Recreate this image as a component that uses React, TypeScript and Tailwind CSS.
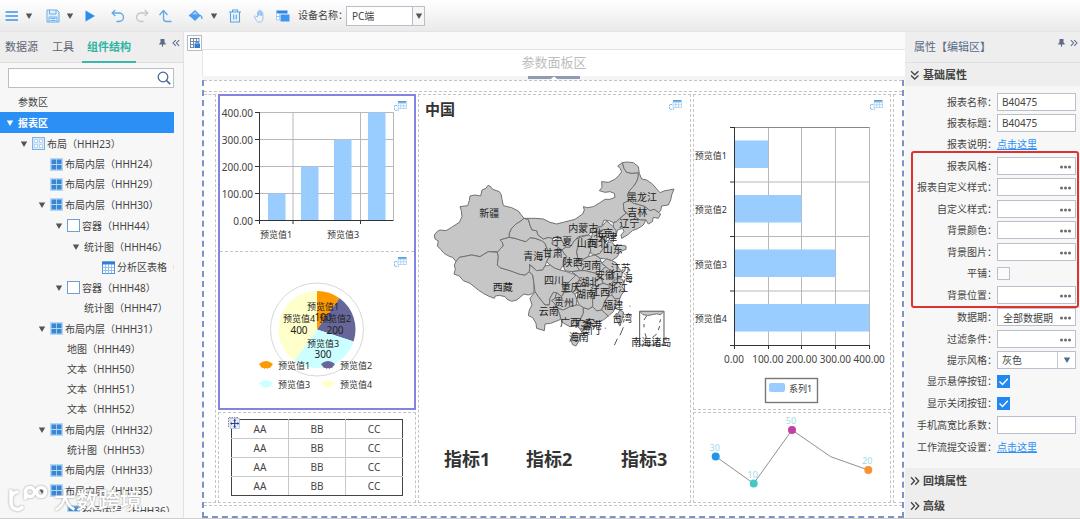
import React from "react";

type Pt = [number, number];

/* ---------- small shared icons ---------- */

function Caret({ className = "text-[#555]" }: { className?: string }) {
  return (
    <svg width="8" height="6" viewBox="0 0 8 6" className={`shrink-0 ${className}`} aria-hidden="true">
      <path d="M0.8 0.5h6.4L4 6z" fill="currentColor" />
    </svg>
  );
}

function PinIcon() {
  return (
    <svg width="7" height="8" viewBox="0 0 7 8" aria-hidden="true">
      <path d="M1.5 0h4v3.4l1.2 1.2v.8H4v2.4H3V5.400H.3v-.8l1.200-1.200z" fill="#5b6b88" />
    </svg>
  );
}

function Chevrons({ dir, size = 8, color = "#5b6b88" }: { dir: "left" | "right" | "down"; size?: number; color?: string }) {
  const d = {
    left: "M4.500 1L1.200 4.500l3.300 3.500M8.500 1L5.200 4.500l3.300 3.500",
    right: "M1 1l3.300 3.500L1 8M5 1l3.300 3.500L5 8",
    down: "M1 1l3.500 3.300L8 1M1 5l3.500 3.300L8 5",
  }[dir];
  return (
    <svg width={size} height={size} viewBox="0 0 9.500 9" aria-hidden="true">
      <path d={d} fill="none" stroke={color} strokeWidth="1.250" />
    </svg>
  );
}

function LinkTableIcon({ x, y }: { x: number; y: number }) {
  return (
    <g transform={`translate(${x} ${y})`}>
      <path d="M4 0h8.500v1.800H4z" fill="#4f9fe0" />
      <path d="M4 2.300h8.500v5.200H4zM4 4.800h8.500M6.800 2v5.500M9.600 2v5.500" fill="none" stroke="#a9cdee" strokeWidth=".8" />
      <path d="M3 4.500H.5v4.800h4V7.500" fill="none" stroke="#6fb2e8" strokeWidth=".9" strokeDasharray="1.800 .8" />
    </g>
  );
}

/* ---------- toolbar ---------- */

function ToolButton({ label, className, children }: { label: string; className: string; children: React.ReactNode }) {
  return (
    <button type="button" aria-label={label} className={`flex h-5 shrink-0 items-center justify-center ${className}`}>
      {children}
    </button>
  );
}

function Toolbar() {
  return (
    <header className="flex h-8 shrink-0 items-center border-b border-[#e4e4e4] bg-linear-to-b from-white to-[#eaeaea] pl-[5px]">
      <ToolButton label="菜单" className="w-[14px]">
        <svg width="14" height="12" viewBox="0 0 14 12">
          <path d="M.5 2h12.500M.5 6h12.500M.5 10h12.500" stroke="#3b93ea" strokeWidth="1.700" />
        </svg>
      </ToolButton>
      <ToolButton label="菜单选项" className="ml-[6px] w-2"><Caret /></ToolButton>
      <ToolButton label="保存" className="ml-[13px] w-[14px]">
        <svg width="14" height="14" viewBox="0 0 14 14" fill="none" stroke="#6aaeea">
          <path d="M1 1h10l2 2v10H1z" fill="#e2f0fc" />
          <path d="M3.500 1v4h6.500V1M3 13V8h8v5M4.500 9.500h5M4.500 11.500h5" />
        </svg>
      </ToolButton>
      <ToolButton label="保存选项" className="ml-[6px] w-2"><Caret /></ToolButton>
      <ToolButton label="运行" className="ml-[10px] w-3">
        <svg width="12" height="12" viewBox="0 0 12 12"><path d="M1.500.5L11 6l-9.500 5.500z" fill="#2b8cf0" /></svg>
      </ToolButton>
      <ToolButton label="撤销" className="ml-[15px] w-[14px]">
        <svg width="14" height="14" viewBox="0 0 14 14" fill="none" stroke="#5fa8ea" strokeWidth="1.300">
          <path d="M4.300 1L1.200 4l3.100 3M1.200 4h7a4.200 4.200 0 0 1 0 8.500H5.500" />
        </svg>
      </ToolButton>
      <ToolButton label="重做" className="ml-[10px] w-[14px]">
        <svg width="14" height="14" viewBox="0 0 14 14" fill="none" stroke="#c6c6c6" strokeWidth="1.300">
          <path d="M9.700 1l3.100 3-3.100 3M12.800 4h-7a4.200 4.200 0 0 0 0 8.500h2.700" />
        </svg>
      </ToolButton>
      <ToolButton label="上一级" className="ml-[9px] w-[15px]">
        <svg width="15" height="14" viewBox="0 0 15 14" fill="none" stroke="#5fa8ea" strokeWidth="1.300">
          <path d="M1.500 6L5.500 1.500 9.500 6M5.500 2v7.500c0 2 1 3 3 3h5" />
        </svg>
      </ToolButton>
      <ToolButton label="填充" className="ml-[15px] w-[15px]">
        <svg width="15" height="13" viewBox="0 0 15 13">
          <path d="M1 6.500L7 1l5.500 5.500L7 12z" fill="#4b9df0" />
          <path d="M4 5.500L7 2.800l3 2.700z" fill="#a9d2fa" />
          <path d="M1 6.500h11.500c1 .6 1.500 1.600 1.500 3.500" fill="none" stroke="#4b9df0" strokeWidth="1.300" />
        </svg>
      </ToolButton>
      <ToolButton label="填充选项" className="ml-[7px] w-2"><Caret /></ToolButton>
      <ToolButton label="删除" className="ml-[10px] w-[14px]">
        <svg width="14" height="14" viewBox="0 0 14 14" fill="none" stroke="#58a4ea" strokeWidth="1.100">
          <path d="M1 3h12M4.500 3V1h5v2M2.500 3v10h9V3M5.700 5.500v5M8.300 5.500v5" />
        </svg>
      </ToolButton>
      <ToolButton label="平移" className="ml-[11px] w-[14px]">
        <svg width="14" height="14" viewBox="0 0 14 14" fill="none" stroke="#8cc0f0" strokeWidth=".9">
          <path d="M4.500 8V3.200c0-1 1.300-1 1.300 0V6.500 1.800c0-1 1.400-1 1.400 0V6.500 2.300c0-1 1.400-1 1.400 0v4.500V4c0-1 1.300-1 1.300 0v5.200c0 2.800-1.400 4-3.400 4-2 0-2.800-1-3.600-2.600L1.500 8c-.4-1 .8-1.400 1.400-.6z" />
        </svg>
      </ToolButton>
      <ToolButton label="表格" className="ml-[9px] w-[14px]">
        <svg width="14" height="12" viewBox="0 0 14 12">
          <path d="M.5.5h11v3H.5z" fill="#2b86e8" />
          <path d="M.5 3.500h3v3h-3zM.5 6.500h3V10h-3z" fill="#fff" stroke="#8abcf0" strokeWidth=".7" />
          <path d="M4.500 4.500h9v7h-9z" fill="#3d96f2" />
        </svg>
      </ToolButton>
      <label htmlFor="device" className="ml-2 w-[47px] shrink-0 text-[10px] whitespace-nowrap text-[#444]">设备名称：</label>
      <div className="relative ml-px flex h-5 w-[79px]">
        <select id="device" defaultValue="PC端" className="block h-5 w-full appearance-none border border-[#b9bec8] bg-white pl-[5px] text-[10px] leading-[14px] text-[#444] outline-none">
          <option>PC端</option>
        </select>
        <span className="pointer-events-none absolute inset-y-px right-px flex w-3 items-center justify-center border-l border-[#b9bec8] bg-[#f6f6f6]">
          <Caret />
        </span>
      </div>
    </header>
  );
}

/* ---------- left tree ---------- */

type NodeIcon = "layout" | "inner" | "box" | "table";

function TreeIcon({ kind }: { kind: NodeIcon }) {
  return (
    <svg width="13" height="13" viewBox="0 0 13 13" className="mr-[2px] shrink-0" aria-hidden="true">
      {kind === "layout" && (
        <>
          <rect x=".5" y=".5" width="12" height="12" fill="#d8eafb" stroke="#7fb2e4" />
          <path d="M2.500 2.500h3v3h-3zM7.500 2.500h3v3h-3zM2.500 7.500h3v3h-3zM7.500 7.500h3v3h-3z" fill="#fff" stroke="#a8cdf0" strokeWidth=".8" />
        </>
      )}
      {kind === "inner" && (
        <>
          <rect width="13" height="13" fill="#b4d6f7" />
          <path d="M1.500 1.500h4.600v4.600H1.500zM6.900 1.500h4.600v4.600H6.900zM1.500 6.900h4.600v4.600H1.500zM6.900 6.900h4.600v4.600H6.900z" fill="#3a86d2" />
        </>
      )}
      {kind === "box" && <rect x=".5" y=".5" width="12" height="12" fill="#fff" stroke="#6f9fd4" />}
      {kind === "table" && (
        <>
          <rect x=".5" y="1" width="12" height="11.500" fill="#fff" stroke="#4f94dc" />
          <path d="M0 .5h13v3H0z" fill="#2f80d4" />
          <path d="M3.500 3v9.500M6.500 3v9.500M9.500 3v9.500M.5 6.500h12M.5 9.500h12" stroke="#7db2e8" strokeWidth=".8" />
        </>
      )}
    </svg>
  );
}

const LEVEL = ["pl-[6px]", "pl-[20px]", "pl-[38px]", "pl-[55px]", "pl-[72px]", "pl-[90px]"];

type Node = { name: string; id?: string; level: number; open?: boolean; icon?: NodeIcon; selected?: boolean };

const NODES: Node[] = [
  { name: "参数区", level: 0 },
  { name: "报表区", level: 0, open: true, selected: true },
  { name: "布局", id: "HHH23", level: 1, open: true, icon: "layout" },
  { name: "布局内层", id: "HHH24", level: 2, icon: "inner" },
  { name: "布局内层", id: "HHH29", level: 2, icon: "inner" },
  { name: "布局内层", id: "HHH30", level: 2, open: true, icon: "inner" },
  { name: "容器", id: "HHH44", level: 3, open: true, icon: "box" },
  { name: "统计图", id: "HHH46", level: 4, open: true },
  { name: "分析区表格", id: "HHH45", level: 5, icon: "table" },
  { name: "容器", id: "HHH48", level: 3, open: true, icon: "box" },
  { name: "统计图", id: "HHH47", level: 4 },
  { name: "布局内层", id: "HHH31", level: 2, open: true, icon: "inner" },
  { name: "地图", id: "HHH49", level: 3 },
  { name: "文本", id: "HHH50", level: 3 },
  { name: "文本", id: "HHH51", level: 3 },
  { name: "文本", id: "HHH52", level: 3 },
  { name: "布局内层", id: "HHH32", level: 2, open: true, icon: "inner" },
  { name: "统计图", id: "HHH53", level: 3 },
  { name: "布局内层", id: "HHH33", level: 2, icon: "inner" },
  { name: "布局内层", id: "HHH35", level: 2, open: true, icon: "inner" },
  { name: "布局内层", id: "HHH36", level: 3, icon: "inner" },
];

function TreeRow({ node }: { node: Node }) {
  const tone = node.selected ? "bg-[#2b90f5] font-bold text-white" : "text-[#444]";
  return (
    <li className={`flex items-center whitespace-nowrap ${node.open ? "h-[21px]" : "h-5"} ${LEVEL[node.level]} ${tone}`}>
      <span className="mr-1 flex w-2 shrink-0">
        {node.open && <Caret className={node.selected ? "text-white" : "text-[#555]"} />}
      </span>
      {node.icon && <TreeIcon kind={node.icon} />}
      <span>{node.name}{node.id && `（${node.id}）`}</span>
    </li>
  );
}

function LeftPanel() {
  return (
    <aside className="relative flex w-[184px] shrink-0 flex-col border-r border-[#e2e2e2] bg-[#f7f7f7]">
      <div className="flex h-[31px] shrink-0 border-b border-[#dcdcdc] bg-[#eeeeee] pl-[5px] text-[11px] text-[#5b6472]">
        <button type="button" className="w-[33px] whitespace-nowrap">数据源</button>
        <button type="button" className="ml-[14px] w-[22px] whitespace-nowrap">工具</button>
        <button type="button" className="ml-2 h-[31px] w-[54px] border-b-2 border-[#3db8a8] pt-[2px] font-bold whitespace-nowrap text-[#2fb5a2]">组件结构</button>
        <button type="button" aria-label="固定" className="mt-[7px] ml-[23px] flex h-2 items-center"><PinIcon /></button>
        <button type="button" aria-label="收起" className="mt-[7px] ml-[6px] flex h-2 items-center"><Chevrons dir="left" /></button>
      </div>
      <div className="mx-2 mt-[5px] flex h-5 w-[166px] shrink-0 items-center border border-[#b8bec9] bg-white">
        <input aria-label="搜索组件" className="h-full min-w-0 flex-1 bg-transparent px-1 text-[10px] outline-none" />
        <button type="button" aria-label="搜索" className="mr-[2px]">
          <svg width="14" height="14" viewBox="0 0 14 14" fill="none" stroke="#4a678c" strokeWidth="1.300">
            <circle cx="6" cy="6" r="4.800" />
            <path d="M9.500 9.500l3.700 3.700" strokeWidth="1.700" />
          </svg>
        </button>
      </div>
      <ul className="mt-1 mr-[9px] mb-[6px] min-h-0 flex-1 overflow-hidden text-[10px] leading-[20px]">
        {NODES.map((n, i) => <TreeRow key={i} node={n} />)}
      </ul>
      <div className="pointer-events-none absolute bottom-[5px] left-2 flex items-center gap-[6px] text-white drop-shadow-[0_0_1px_#999]">
        <svg width="40" height="28" viewBox="0 0 40 28" fill="none" stroke="currentColor" strokeWidth="3.600" strokeLinecap="round">
          <path d="M3 6v12a6.500 6.500 0 0 0 11 4.500M3 14c0-4 3-7 6-7" />
          <circle cx="22" cy="7" r="4.500" />
          <circle cx="33" cy="7" r="4.500" />
          <path d="M17.500 7v6" />
        </svg>
        <span className="text-[22px] leading-[28px] font-medium whitespace-nowrap">大数跨境</span>
      </div>
    </aside>
  );
}

/* ---------- charts ---------- */

function ColumnChart() {
  const bars = [
    { x: 268, y: 193.5 },
    { x: 301, y: 166.5 },
    { x: 334, y: 139.5 },
    { x: 368, y: 112.5 },
  ];
  const ticks = ["400.00", "300.00", "200.00", "100.00", "0.00"];
  return (
    <svg width="194" height="155" viewBox="220 96 194 155" className="mx-auto block shrink-0" role="img" aria-label="柱形图">
      <g stroke="#b8b8b8" fill="none">
        <path d="M259 112.500H393.500V220M259 139.500H393M259 166.500H393M259 193.500H393M293 112V220M360.500 112V220" />
      </g>
      {bars.map((b) => <rect key={b.x} x={b.x} y={b.y} width="17.500" height={220.5 - b.y} fill="#99ccff" />)}
      <path d="M259.500 112V224M255 220.500H393.500M255 112.500h4M255 139.500h4M255 166.500h4M255 193.500h4M293 220v4M360.500 220v4" stroke="#333" fill="none" />
      <g fontSize="10" fill="#444">
        {ticks.map((t, i) => <text key={t} x="253" y={116.5 + i * 27} textAnchor="end">{t}</text>)}
      </g>
      <g fontSize="9" fill="#333" textAnchor="middle">
        <text x="276" y="238">预览值1</text>
        <text x="343" y="238">预览值3</text>
      </g>
      <LinkTableIcon x={394} y={101} />
    </svg>
  );
}

const PIE_CENTER: Pt = [317, 329.5];

function slice(from: number, to: number, r = 38.5) {
  const [cx, cy] = PIE_CENTER;
  const p = (deg: number) => {
    const a = ((deg - 90) * Math.PI) / 180;
    return `${cx + r * Math.cos(a)} ${cy + r * Math.sin(a)}`;
  };
  return `M${cx} ${cy}L${p(from)}A${r} ${r} 0 0 1 ${p(to)}Z`;
}

function PieChart() {
  const colors = ["#ff9900", "#666699", "#ccffff", "#ffffcc"];
  const angles = [0, 36, 108, 216, 360];
  const labels: [string, number, number][] = [
    ["预览值1", 323, 310], ["100", 323, 321], ["预览值2", 335, 322], ["200", 335, 334],
    ["预览值3", 323, 347], ["300", 323, 358], ["预览值4", 299, 322], ["400", 299, 334],
  ];
  const legend: Pt[] = [[259, 365], [321, 365], [259, 384], [321, 384]];
  return (
    <svg width="194" height="156" viewBox="220 252 194 156" className="mx-auto block shrink-0" role="img" aria-label="饼图">
      <circle cx={PIE_CENTER[0]} cy={PIE_CENTER[1]} r="46.500" fill="none" stroke="#d8d8d8" />
      {colors.map((c, i) => <path key={c} d={slice(angles[i], angles[i + 1])} fill={c} />)}
      <g fontSize="9" fill="#222" textAnchor="middle">
        {labels.map(([t, x, y]) => <text key={t} x={x} y={y} fontSize={t.length === 3 ? 10 : 9}>{t}</text>)}
      </g>
      {legend.map(([x, y], i) => (
        <g key={i}>
          <path d={`M${x} ${y - 1}q7 -6 14 0l-3 4q-1.500 -1 -2.500 1q-1.500 -2 -3 0q-1 -2 -2.500 -1z`} fill={colors[i]} />
          <text x={x + 19} y={y + 4} fontSize="9" fill="#333">{`预览值${i + 1}`}</text>
        </g>
      ))}
      <LinkTableIcon x={394} y={257} />
    </svg>
  );
}

function BarChart() {
  const xs = [768, 801.5, 835.5, 869];
  return (
    <svg width="196" height="313" viewBox="694 95 196 313" className="mx-auto block shrink-0" role="img" aria-label="条形图">
      <path d="M768.500 127V345M801.500 127V345M835.500 127V345M869.500 127V345M734 182H869M734 236.500H869M734 291H869" stroke="#b8b8b8" fill="none" />
      <path d="M734 127.500H869.500" stroke="#888" />
      {xs.map((x, i) => <rect key={x} x="735" y={140.5 + i * 54.5} width={x - 735} height="27.500" fill="#99ccff" />)}
      <path d="M734.500 127V349M730 345.500H869.500M730 127.500h4M730 182h4M730 236.500h4M730 291h4M768.500 345v4M801.500 345v4M835.500 345v4M869.500 345v4" stroke="#333" fill="none" />
      <g fontSize="9" fill="#333" textAnchor="end">
        {[1, 2, 3, 4].map((n) => <text key={n} x="727" y={104 + n * 54.5}>{`预览值${n}`}</text>)}
      </g>
      <g fontSize="10" fill="#444" textAnchor="middle">
        {["0.00", "100.00", "200.00", "300.00", "400.00"].map((t, i) => <text key={t} x={734 + i * 33.8} y="363">{t}</text>)}
      </g>
      <rect x="765.500" y="378.500" width="52" height="24" fill="#fff" stroke="#777" strokeWidth="1.400" />
      <rect x="769" y="383" width="16" height="9" rx="2" fill="#99ccff" />
      <text x="789" y="392" fontSize="9" fill="#333">系列1</text>
      <LinkTableIcon x={870} y={100} />
    </svg>
  );
}

function LineChart() {
  const dots: { x: number; y: number; c: string; v: string }[] = [
    { x: 715.7, y: 456.5, c: "#1e96ea", v: "30" },
    { x: 753.7, y: 483.5, c: "#45c8c4", v: "10" },
    { x: 792, y: 430, c: "#c43fa4", v: "50" },
    { x: 868.3, y: 470, c: "#f7922e", v: "20" },
  ];
  return (
    <svg width="196" height="89" viewBox="694 413 196 89" className="mx-auto block shrink-0" role="img" aria-label="折线图">
      <path d="M715.700 456.500L753.700 483.500 792 430l38.700 26.700L868.300 470" fill="none" stroke="#909090" />
      {dots.map((d) => (
        <g key={d.v}>
          <circle cx={d.x} cy={d.y} r="4" fill={d.c} />
          <text x={d.x - 1} y={d.y - 6} fontSize="9" fill="#9edbe8" textAnchor="middle">{d.v}</text>
        </g>
      ))}
    </svg>
  );
}

/* ---------- map ---------- */

const PROVINCES = [
  // Xinjiang, Tibet, Qinghai
  "43,285 52,274 60,270 78,272 95,262 118,247 126,230 124,212 120,200 143,197 148,182 150,168 165,165 182,168 186,150 198,145 204,136 211,139 218,148 238,155 244,165 246,178 250,197 275,203 295,213 304,225 312,235 300,245 288,252 275,265 268,280 268,292 240,300 247,307 250,318 242,325 238,335 205,335 180,350 155,345 140,348 118,352 108,365 98,352 90,350 72,340 62,328 52,318 55,303 45,297",
  "108,365 118,352 140,348 155,345 180,350 205,335 232,337 235,350 232,375 240,383 270,392 300,403 315,405 328,395 338,405 342,430 342,455 335,462 325,465 312,462 300,472 290,480 275,484 262,478 255,470 238,466 226,468 223,475 205,468 190,460 175,450 150,430 130,422 118,408 102,402 106,388 103,375",
  "232,337 242,325 250,318 247,307 240,300 268,292 285,295 300,300 318,305 330,293 345,295 365,302 375,310 383,330 388,350 380,365 375,378 368,390 350,392 335,378 328,373 330,388 328,395 315,405 300,403 270,392 240,383 232,375 235,350",
  // Gansu, Inner Mongolia
  "312,235 325,238 330,255 336,270 350,272 354,285 370,297 385,292 398,295 396,312 412,320 425,330 440,350 430,360 430,375 420,390 405,385 390,375 380,365 388,350 383,330 375,310 365,302 345,295 330,293 318,305 300,300 285,295 268,292 268,280 275,265 288,252 300,245",
  "312,235 345,235 370,237 390,247 410,252 430,247 465,238 488,222 493,210 490,200 503,203 520,200 540,188 555,178 570,178 585,172 583,160 570,155 555,157 538,152 546,142 545,125 565,127 585,118 598,105 605,95 600,85 593,78 607,68 612,85 620,97 636,100 655,98 655,110 650,125 640,140 630,150 622,165 628,180 610,190 612,210 618,220 600,235 590,245 580,248 570,243 552,240 545,260 530,262 520,267 505,285 475,290 465,300 450,322 437,322 430,310 420,292 410,290 398,295 385,292 370,297 354,285 350,272 336,270 330,255 325,238",
  // Heilongjiang, Jilin, Liaoning
  "607,68 620,66 640,68 655,80 658,100 665,117 680,120 697,132 720,158 735,152 748,150 762,147 755,165 752,180 745,195 725,198 722,212 715,217 703,208 690,212 675,200 660,195 640,190 628,180 622,165 630,150 640,140 650,125 655,110 655,98 636,100 620,97 612,85",
  "628,180 640,190 660,195 675,200 690,212 703,208 715,217 722,222 715,235 700,232 697,245 685,252 678,240 662,240 650,235 640,222 625,225 612,210 610,190",
  "612,210 625,225 640,222 650,235 662,240 678,240 670,255 655,265 637,272 625,283 605,295 603,285 612,275 608,265 592,270 590,280 580,270 580,248 590,245 600,235 618,220",
  // Ningxia, Shaanxi, Shanxi
  "405,300 420,292 430,310 437,322 425,330 412,320 396,312",
  "437,322 450,322 465,300 477,293 475,315 470,335 474,358 470,378 480,392 455,395 435,392 430,375 430,360 440,350 425,330",
  "477,293 505,285 515,290 508,310 512,330 505,350 490,358 474,358 470,335 475,315",
  // Hebei, Beijing, Shandong
  "515,290 520,267 530,262 545,260 560,243 578,258 588,272 590,288 575,297 562,292 555,305 562,318 550,325 540,340 525,345 512,340 512,330 508,310",
  "535,275 550,268 560,280 555,292 540,292",
  "562,318 562,308 575,305 585,318 600,315 618,318 618,328 600,335 592,350 575,362 560,357 540,355 525,345 540,340 550,325",
  // Henan, Jiangsu, Anhui
  "474,358 490,358 505,350 525,345 540,355 545,370 558,380 545,392 535,402 515,397 495,392 480,392 470,378",
  "545,370 560,357 575,362 588,368 597,385 607,397 605,412 590,415 577,412 575,392 562,385 558,380",
  "558,380 562,385 575,392 577,412 580,425 565,435 550,430 543,415 545,392",
  // Sichuan, Chongqing, Hubei
  "342,430 338,405 328,395 330,375 350,392 368,390 375,378 390,375 405,385 420,390 440,395 468,405 465,420 448,425 435,440 432,455 425,470 410,458 400,457 390,475 388,495 375,495 367,485 355,470 345,455",
  "468,405 480,415 470,430 465,440 475,455 465,463 455,455 432,458 435,440 448,425",
  "455,395 480,392 495,392 515,397 535,402 543,415 550,430 530,437 510,432 495,440 470,438 480,415 468,405",
  // Hunan, Jiangxi, Zhejiang, Fujian
  "470,438 495,440 510,432 530,437 527,455 518,475 520,498 505,508 490,503 478,495 470,478 475,455 465,445",
  "530,437 550,430 565,435 577,435 578,450 565,468 555,485 545,510 530,513 518,500 518,475 527,455",
  "577,435 580,425 592,415 608,418 612,430 606,440 614,452 604,465 600,475 585,477 575,465 578,450",
  "565,468 575,465 585,477 600,475 595,490 585,500 580,515 565,528 555,520 545,510 555,485",
  // Yunnan, Guizhou, Guangxi, Guangdong
  "345,455 355,470 367,485 375,495 388,495 390,475 400,457 410,458 405,475 395,482 405,492 412,505 420,525 422,538 405,545 392,550 375,552 373,572 360,568 350,565 348,550 338,533 325,527 328,510 336,495 330,475",
  "410,458 425,470 432,458 455,455 465,463 470,478 470,495 450,500 430,510 412,505 405,492 395,482 405,475",
  "412,505 430,510 450,500 470,495 478,495 490,503 490,520 480,540 470,558 450,560 435,552 425,545 420,525",
  "490,503 505,508 518,500 530,513 545,510 555,520 565,528 550,540 530,547 515,552 495,562 485,575 478,565 470,558 480,540 490,520",
  // Hainan, Taiwan
  "457,582 468,577 480,583 478,600 468,618 458,614 453,600",
  "600,510 610,516 608,535 600,558 592,545 588,530",
];

const PLACE_NAMES: [string, number, number][] = [
  ["新疆", 208, 220], ["西藏", 248, 440], ["青海", 340, 347], ["甘肃", 398, 340], ["宁夏", 427, 303],
  ["内蒙古", 490, 264], ["黑龙江", 666, 172], ["吉林", 652, 217], ["辽宁", 628, 250], ["北京", 550, 278],
  ["天津", 562, 290], ["河北", 535, 308], ["山西", 500, 310], ["山东", 578, 328], ["陕西", 458, 367],
  ["河南", 514, 375], ["江苏", 602, 385], ["上海", 608, 414], ["安徽", 555, 405], ["湖北", 508, 427],
  ["重庆", 452, 442], ["四川", 402, 420], ["湖南", 498, 462], ["江西", 540, 455], ["浙江", 594, 445],
  ["贵州", 432, 487], ["云南", 386, 512], ["福建", 580, 495], ["广西", 450, 545], ["广东", 495, 548],
  ["香港", 516, 555], ["澳门", 510, 570], ["海南", 476, 592], ["台湾", 607, 535], ["南海诸岛", 694, 606],
];

function ChinaMap() {
  return (
    <svg width="269" height="240" viewBox="420 125 269 240" className="mx-auto block shrink-0" role="img" aria-label="中国地图">
      <g transform="translate(420 140) scale(.33333)" fill="#c6c6c6" stroke="#707070" strokeWidth="3" strokeLinejoin="round">
        {PROVINCES.map((p, i) => <polygon key={i} points={p} />)}
        <path d="M583 616l9 -20M600 586l10 -24M630 497v3M556 563v3" stroke="#555" />
        <rect x="659" y="514" width="73" height="101" fill="#fff" stroke="#555" />
        <path d="M659 514h73l-10 10q-12 -5 -25 0t-28 0z" />
        <path d="M672 540l8 -12M672 562v-10M675 580l4 12M722 538l-3 10M719 558l-4 12M710 582l-12 10" stroke="#555" fill="none" />
      </g>
      <g fontSize="10" fill="#222" textAnchor="middle">
        {PLACE_NAMES.map(([t, x, y]) => <text key={t} x={420 + x / 3} y={144 + y / 3}>{t}</text>)}
      </g>
    </svg>
  );
}

/* ---------- canvas ---------- */

function DataTable() {
  return (
    <div className="relative mx-auto mt-[6px] w-[172px]">
      <table className="w-full table-fixed border-collapse border border-[#444] text-center text-[10px] leading-[18px] text-[#444]">
        <tbody>
          {[0, 1, 2, 3].map((r) => (
            <tr key={r} className="h-[19px]">
              {["AA", "BB", "CC"].map((c) => <td key={c} className="border border-[#c8c8c8] p-0 first:border-l-[#444] last:border-r-[#444] [tr:first-child>&]:border-t-[#444] [tr:last-child>&]:border-b-[#444]">{c}</td>)}
            </tr>
          ))}
        </tbody>
      </table>
      <button type="button" aria-label="移动表格" className="absolute -top-[2px] -left-[3px]">
        <svg width="12" height="12" viewBox="0 0 12 12" className="block">
          <path d="M.5 10V.5H11" fill="none" stroke="#888" strokeDasharray="1.500 1" />
          <rect x="2" y="1.500" width="9.500" height="10" fill="#e6ecfa" stroke="#a9b6dc" strokeWidth=".7" />
          <path d="M6.700 2.500v8M2.700 6.500h8" stroke="#2b3f8c" strokeWidth="1.100" />
          <path d="M6.700 2l1.500 1.700h-3zM6.700 11L5.200 9.300h3zM2.300 6.500L4 5v3zM11.200 6.500L9.500 5v3z" fill="#2b3f8c" />
        </svg>
      </button>
    </div>
  );
}

const CELL = "border border-dashed border-[#c4c4c4]";

function Canvas() {
  return (
    <main className="flex min-w-0 flex-1 bg-[#fafafa]">
      <div className="w-[18px] shrink-0 pt-[3px] pl-[3px]">
        <button type="button" aria-label="表格设置" className="block h-[16px] w-[15px] border border-[#b5bccb] bg-white">
          <svg width="13" height="14" viewBox="0 0 13 14">
            <path d="M2 2.500h9M2 5.500h9M2 8.500h4M2 11.500h4M2.500 2v9.500M5.500 2v9.500M8.500 2v4M11 2v4" stroke="#6a7fa6" strokeWidth=".9" />
            <path d="M6.500 7.500h5.500v4.500H6.500z" fill="#2f7fd0" />
            <path d="M7.800 7.500V6.300h3v1.200" fill="none" stroke="#2f7fd0" />
          </svg>
        </button>
      </div>
      <div className="flex min-w-0 flex-1 flex-col">
        <div className="h-[18px] shrink-0 border-b border-[#e2e2e2]" />
        <div className="flex h-[26px] shrink-0 items-center justify-center border-l border-[#e6e6e6] bg-white text-[13px] text-[#bdbdbd]">参数面板区</div>
        <div className="flex h-1 shrink-0 justify-center bg-[#f4f4f4]">
          <svg width="52" height="4" viewBox="0 0 52 4" aria-hidden="true">
            <path d="M0 0h52v3H0z" fill="#8f9bb3" />
            <path d="M22 3.500L26 .5l4 3z" fill="#fff" />
          </svg>
        </div>
        <div className="mr-px flex min-h-0 flex-1 flex-col gap-0.5 overflow-hidden border-2 border-t-0 border-dashed border-[#7d93c6] bg-white">
          <div className="h-3 shrink-0 border-y border-dashed border-[#c4c4c4]" />
          <div className="grid min-h-0 flex-1 grid-cols-[12px_198fr_273fr_198fr_9px] gap-x-0.5">
            <div className="border-y border-r border-dashed border-[#c4c4c4]" />
            <div className="flex min-w-0 flex-col gap-0.5">
              <section className="flex min-h-0 flex-1 flex-col overflow-hidden border-2 border-[#8383e2]">
                <div className="border-b border-dashed border-[#c4c4c4]"><ColumnChart /></div>
                <PieChart />
              </section>
              <section className={`h-[91px] shrink-0 ${CELL}`}><DataTable /></section>
            </div>
            <section className={`flex min-w-0 flex-col overflow-hidden ${CELL}`}>
              <div className="flex h-[30px] shrink-0 justify-between pr-[8px] pl-[6px]">
                <h1 className="pt-[3px] text-[15px] leading-[22px] font-bold text-[#333]">中国</h1>
                <svg width="13" height="10" viewBox="0 0 13 10" className="mt-[5px]" aria-hidden="true"><LinkTableIcon x={0} y={0} /></svg>
              </div>
              <ChinaMap />
              <div className="mt-[81px] flex shrink-0 pl-[25px] text-[18px] leading-[26px] font-bold whitespace-nowrap text-[#333]">
                <span className="w-[47px]">指标1</span>
                <span className="ml-[35px] w-[47px]">指标2</span>
                <span className="ml-12 w-[47px]">指标3</span>
              </div>
            </section>
            <div className="flex min-w-0 flex-col gap-0.5">
              <section className={`min-h-0 flex-1 overflow-hidden ${CELL}`}><BarChart /></section>
              <section className={`h-[91px] shrink-0 ${CELL}`}><LineChart /></section>
            </div>
            <div className="border-y border-l border-dashed border-[#c4c4c4]" />
          </div>
          <div className="h-[11px] shrink-0 border-t border-dashed border-[#c4c4c4]" />
        </div>
      </div>
    </main>
  );
}

/* ---------- properties ---------- */

type Kind = "text" | "link" | "picker" | "check" | "select";
type Prop = { label: string; kind: Kind; value?: string; checked?: boolean; height?: "h-[22px]" };

const TOP_PROPS: Prop[] = [
  { label: "报表名称", kind: "text", value: "B40475" },
  { label: "报表标题", kind: "text", value: "B40475" },
  { label: "报表说明", kind: "link", height: "h-[22px]" },
];
const STYLE_PROPS: Prop[] = [
  { label: "报表风格", kind: "picker" },
  { label: "报表自定义样式", kind: "picker", height: "h-[22px]" },
  { label: "自定义样式", kind: "picker" },
  { label: "背景颜色", kind: "picker", height: "h-[22px]" },
  { label: "背景图片", kind: "picker" },
  { label: "平铺", kind: "check", height: "h-[22px]" },
  { label: "背景位置", kind: "picker", height: "h-[22px]" },
];
const MORE_PROPS: Prop[] = [
  { label: "数据期", kind: "picker", value: "全部数据期", height: "h-[22px]" },
  { label: "过滤条件", kind: "picker" },
  { label: "提示风格", kind: "select", value: "灰色" },
  { label: "显示悬停按钮", kind: "check", checked: true, height: "h-[22px]" },
  { label: "显示关闭按钮", kind: "check", checked: true, height: "h-[22px]" },
  { label: "手机高宽比系数", kind: "text", height: "h-[22px]" },
  { label: "工作流提交设置", kind: "link" },
];

const BOX = "h-[18px] border border-[#b9bfcb] bg-white";

function Field({ id, prop }: { id: string; prop: Prop }) {
  switch (prop.kind) {
    case "link":
      return <a id={id} href="#" className="text-[#2b90f5] underline underline-offset-1">点击这里</a>;
    case "text":
      return <input id={id} defaultValue={prop.value} className={`w-full min-w-0 pl-1 outline-none ${BOX}`} />;
    case "picker":
      return (
        <div className={`flex w-full items-center pr-[3px] ${BOX}`}>
          <input id={id} defaultValue={prop.value} className="h-full min-w-0 flex-1 bg-transparent pl-[5px] outline-none" />
          <button type="button" aria-label={`选择${prop.label}`} className="shrink-0">
            <svg width="13" height="6" viewBox="0 0 13 6" fill="#6b6b6b">
              <circle cx="2.500" cy="4" r="1.500" /><circle cx="6.500" cy="4" r="1.500" /><circle cx="10.500" cy="4" r="1.500" />
            </svg>
          </button>
        </div>
      );
    case "select":
      return (
        <div className="relative w-full">
          <select id={id} defaultValue={prop.value} className={`block w-full appearance-none pl-1 outline-none ${BOX}`}>
            <option>{prop.value}</option>
          </select>
          <span className="pointer-events-none absolute inset-y-px right-px flex w-[18px] items-center justify-center border-l border-[#c4c9d2]">
            <Caret className="text-[#4c6a92]" />
          </span>
        </div>
      );
    case "check":
      return (
        <span className="relative flex size-[13px]">
          <input id={id} type="checkbox" defaultChecked={prop.checked} className="peer size-[13px] appearance-none border border-[#b9bfcb] bg-[#fafafa] checked:border-[#2088f0] checked:bg-[#2088f0]" />
          <svg viewBox="0 0 13 13" className="pointer-events-none absolute inset-0 hidden peer-checked:block" fill="none" stroke="#fff" strokeWidth="1.400">
            <path d="M2.500 6.500l3 3L10.800 3.800" />
          </svg>
        </span>
      );
  }
}

function PropRow({ prop }: { prop: Prop }) {
  const id = `prop-${prop.label}`;
  return (
    <div className={`flex items-center pr-1 ${prop.height ?? "h-[21px]"}`}>
      <label htmlFor={id} className="w-[92px] shrink-0 text-right whitespace-nowrap">{prop.label}：</label>
      <div className="flex min-w-0 flex-1 items-center">
        <Field id={id} prop={prop} />
      </div>
    </div>
  );
}

function RightPanel() {
  return (
    <aside className="flex w-[175px] shrink-0 flex-col bg-[#f7f7f7] text-[10px] leading-[14px] text-[#444]">
      <div className="flex h-[31px] shrink-0 items-center border-b border-[#e0e0e0] bg-[#eeeeee] pr-[2px] pl-[9px] text-[11px] text-[#5b6b88]">
        <h2 className="flex-1 whitespace-nowrap">属性【编辑区】</h2>
        <button type="button" aria-label="固定" className="mb-2 flex h-2"><PinIcon /></button>
        <button type="button" aria-label="收起" className="mb-2 ml-[5px] flex h-2"><Chevrons dir="right" /></button>
      </div>
      <button type="button" className="flex h-[23px] shrink-0 items-center gap-[3px] bg-[#eeeeee] pl-[5px] text-[11px] font-bold text-[#444]">
        <Chevrons dir="down" size={10} color="#444" />基础属性
      </button>
      <div className="mt-[5px]">
        {TOP_PROPS.map((p) => <PropRow key={p.label} prop={p} />)}
        <div className="relative">
          {STYLE_PROPS.map((p) => <PropRow key={p.label} prop={p} />)}
          <div className="pointer-events-none absolute -top-1 right-px -bottom-[2px] left-[6px] rounded-[3px] border-2 border-[#dc3330]" />
        </div>
        {MORE_PROPS.map((p) => <PropRow key={p.label} prop={p} />)}
      </div>
      <div className="mt-[11px] flex min-h-0 flex-1 flex-col bg-[#eeeeee] text-[11px] font-bold text-[#444]">
        <button type="button" className="flex h-[25px] shrink-0 items-center gap-[3px] pl-[5px]"><Chevrons dir="right" size={10} color="#444" />回填属性</button>
        <button type="button" className="flex h-[25px] shrink-0 items-center gap-[3px] pl-[5px]"><Chevrons dir="right" size={10} color="#444" />高级</button>
      </div>
    </aside>
  );
}

export default function App() {
  return (
    <div className="flex h-screen flex-col overflow-hidden border-b border-[#cfcfcf] bg-white font-['Noto_Sans','Noto_Sans_CJK_SC',sans-serif]">
      <Toolbar />
      <div className="flex min-h-0 flex-1">
        <LeftPanel />
        <Canvas />
        <RightPanel />
      </div>
    </div>
  );
}
